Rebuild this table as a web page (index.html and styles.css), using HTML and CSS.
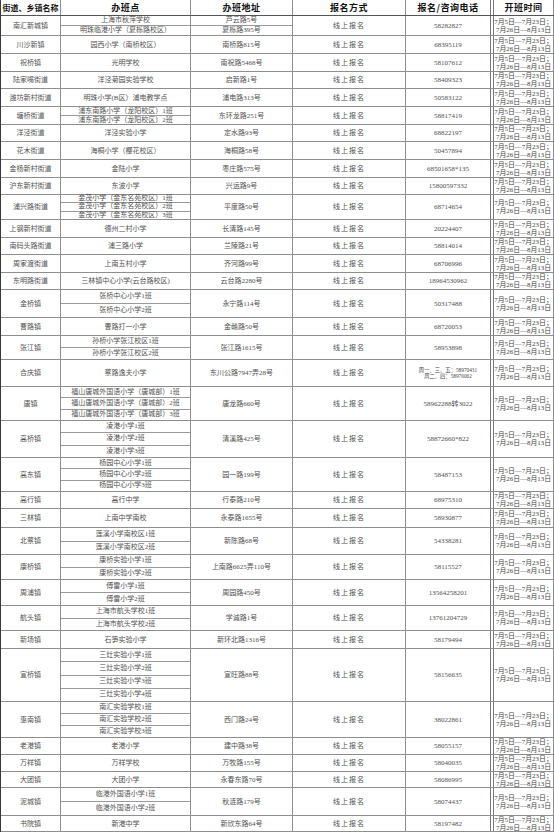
FILE: index.html
```html
<!DOCTYPE html>
<html lang="zh-CN">
<head>
<meta charset="utf-8">
<title>暑托班办班点</title>
<link rel="stylesheet" href="styles.css">
</head>
<body>
<div class="sheet">
  <div class="row head">
    <div class="c c1 hd narrow">街道、乡镇名称</div>
    <div class="c c2 hd">办班点</div>
    <div class="c c3 hd">办班地址</div>
    <div class="c c4 hd">报名方式</div>
    <div class="c c5 hd">报名/咨询电话</div>
    <div class="c c6 hd">开班时间</div>
  </div>

  <div class="row h20">
    <div class="c c1">南汇新城镇</div>
    <div class="stack c2"><div class="sub">上海市秋萍学校</div><div class="sub">明珠临港小学（夏栎路校区）</div></div>
    <div class="stack c3"><div class="sub">芦云路5号</div><div class="sub">夏栎路395号</div></div>
    <div class="c c4">线上报名</div>
    <div class="c c5">58282827</div>
    <div class="c c6 date"><span>7月5日—7月23日；</span><span>7月26日—8月13日</span></div>
  </div>

  <div class="row h18">
    <div class="c c1">川沙新镇</div>
    <div class="c c2">园西小学（南桥校区）</div>
    <div class="c c3">南桥路815号</div>
    <div class="c c4">线上报名</div>
    <div class="c c5">68395119</div>
    <div class="c c6 date"><span>7月5日—7月23日；</span><span>7月26日—8月13日</span></div>
  </div>

  <div class="row h18">
    <div class="c c1">祝桥镇</div>
    <div class="c c2">光明学校</div>
    <div class="c c3">南祝路5468号</div>
    <div class="c c4">线上报名</div>
    <div class="c c5">58107612</div>
    <div class="c c6 date"><span>7月5日—7月23日；</span><span>7月26日—8月13日</span></div>
  </div>

  <div class="row h17">
    <div class="c c1">陆家嘴街道</div>
    <div class="c c2">洋泾菊园实验学校</div>
    <div class="c c3">启新路1号</div>
    <div class="c c4">线上报名</div>
    <div class="c c5">58409323</div>
    <div class="c c6 date"><span>7月5日—7月23日；</span><span>7月26日—8月13日</span></div>
  </div>

  <div class="row h18">
    <div class="c c1">潍坊新村街道</div>
    <div class="c c2">明珠小学(B区）浦电教学点</div>
    <div class="c c3">浦电路313号</div>
    <div class="c c4">线上报名</div>
    <div class="c c5">50583122</div>
    <div class="c c6 date"><span>7月5日—7月23日；</span><span>7月26日—8月13日</span></div>
  </div>

  <div class="row h18">
    <div class="c c1">塘桥街道</div>
    <div class="stack c2"><div class="sub">浦东南路小学（龙阳校区）1班</div><div class="sub">浦东南路小学（龙阳校区）2班</div></div>
    <div class="c c3">东环龙路251号</div>
    <div class="c c4">线上报名</div>
    <div class="c c5">58817419</div>
    <div class="c c6 date"><span>7月5日—7月23日；</span><span>7月26日—8月13日</span></div>
  </div>

  <div class="row h17">
    <div class="c c1">洋泾街道</div>
    <div class="c c2">洋泾实验小学</div>
    <div class="c c3">定水路93号</div>
    <div class="c c4">线上报名</div>
    <div class="c c5">68822197</div>
    <div class="c c6 date"><span>7月5日—7月23日；</span><span>7月26日—8月13日</span></div>
  </div>

  <div class="row h18">
    <div class="c c1">花木街道</div>
    <div class="c c2">海桐小学（樱花校区）</div>
    <div class="c c3">海桐路58号</div>
    <div class="c c4">线上报名</div>
    <div class="c c5">50457894</div>
    <div class="c c6 date"><span>7月5日—7月23日；</span><span>7月26日—8月13日</span></div>
  </div>

  <div class="row h18">
    <div class="c c1">金杨新村街道</div>
    <div class="c c2">金陆小学</div>
    <div class="c c3">枣庄路575号</div>
    <div class="c c4">线上报名</div>
    <div class="c c5">68501658*135</div>
    <div class="c c6 date"><span>7月5日—7月23日；</span><span>7月26日—8月13日</span></div>
  </div>

  <div class="row h17">
    <div class="c c1">沪东新村街道</div>
    <div class="c c2">东波小学</div>
    <div class="c c3">兴运路9号</div>
    <div class="c c4">线上报名</div>
    <div class="c c5">15800597332</div>
    <div class="c c6 date"><span>7月5日—7月23日；</span><span>7月26日—8月13日</span></div>
  </div>

  <div class="row h25">
    <div class="c c1">浦兴路街道</div>
    <div class="stack c2"><div class="sub">金茂小学（金东名苑校区）1班</div><div class="sub">金茂小学（金东名苑校区）2班</div><div class="sub">金茂小学（金东名苑校区）3班</div></div>
    <div class="c c3">平度路50号</div>
    <div class="c c4">线上报名</div>
    <div class="c c5">68714654</div>
    <div class="c c6 date"><span>7月5日—7月23日；</span><span>7月26日—8月13日</span></div>
  </div>

  <div class="row h18">
    <div class="c c1">上钢新村街道</div>
    <div class="c c2">德州二村小学</div>
    <div class="c c3">长清路145号</div>
    <div class="c c4">线上报名</div>
    <div class="c c5">20224407</div>
    <div class="c c6 date"><span>7月5日—7月23日；</span><span>7月26日—8月13日</span></div>
  </div>

  <div class="row h17">
    <div class="c c1">南码头路街道</div>
    <div class="c c2">浦三路小学</div>
    <div class="c c3">兰陵路21号</div>
    <div class="c c4">线上报名</div>
    <div class="c c5">58814014</div>
    <div class="c c6 date"><span>7月5日—7月23日；</span><span>7月26日—8月13日</span></div>
  </div>

  <div class="row h18">
    <div class="c c1">周家渡街道</div>
    <div class="c c2">上南五村小学</div>
    <div class="c c3">齐河路99号</div>
    <div class="c c4">线上报名</div>
    <div class="c c5">68706996</div>
    <div class="c c6 date"><span>7月5日—7月23日；</span><span>7月26日—8月13日</span></div>
  </div>

  <div class="row h17">
    <div class="c c1">东明路街道</div>
    <div class="c c2">三林镇中心小学(云台路校区)</div>
    <div class="c c3">云台路2280号</div>
    <div class="c c4">线上报名</div>
    <div class="c c5">18964530962</div>
    <div class="c c6 date"><span>7月5日—7月23日；</span><span>7月26日—8月13日</span></div>
  </div>

  <div class="row h28">
    <div class="c c1">金桥镇</div>
    <div class="stack c2"><div class="sub">张桥中心小学1班</div><div class="sub">张桥中心小学2班</div></div>
    <div class="c c3">永宁路114号</div>
    <div class="c c4">线上报名</div>
    <div class="c c5">50317488</div>
    <div class="c c6 date"><span>7月5日—7月23日；</span><span>7月26日—8月13日</span></div>
  </div>

  <div class="row h18">
    <div class="c c1">曹路镇</div>
    <div class="c c2">曹路打一小学</div>
    <div class="c c3">金赣路50号</div>
    <div class="c c4">线上报名</div>
    <div class="c c5">68720053</div>
    <div class="c c6 date"><span>7月5日—7月23日；</span><span>7月26日—8月13日</span></div>
  </div>

  <div class="row h24">
    <div class="c c1">张江镇</div>
    <div class="stack c2"><div class="sub">孙桥小学张江校区1班</div><div class="sub">孙桥小学张江校区2班</div></div>
    <div class="c c3">张江路1615号</div>
    <div class="c c4">线上报名</div>
    <div class="c c5">58953898</div>
    <div class="c c6 date"><span>7月5日—7月23日；</span><span>7月26日—8月13日</span></div>
  </div>

  <div class="row h27">
    <div class="c c1">合庆镇</div>
    <div class="c c2">蔡路逸夫小学</div>
    <div class="c c3">东川公路7947弄28号</div>
    <div class="c c4">线上报名</div>
    <div class="c c5 tiny"><span>周一、三、五：58970431</span><span>周二、四：58976062</span></div>
    <div class="c c6 date"><span>7月5日—7月23日；</span><span>7月26日—8月13日</span></div>
  </div>

  <div class="row h34">
    <div class="c c1">唐镇</div>
    <div class="stack c2"><div class="sub">福山唐城外国语小学（唐城部）1班</div><div class="sub">福山唐城外国语小学（唐城部）2班</div><div class="sub">福山唐城外国语小学（唐城部）3班</div></div>
    <div class="c c3">唐龙路660号</div>
    <div class="c c4">线上报名</div>
    <div class="c c5">58962288转3022</div>
    <div class="c c6 date"><span>7月5日—7月23日；</span><span>7月26日—8月13日</span></div>
  </div>

  <div class="row h37">
    <div class="c c1">高桥镇</div>
    <div class="stack c2"><div class="sub">凌港小学1班</div><div class="sub">凌港小学2班</div><div class="sub">凌港小学3班</div></div>
    <div class="c c3">清溪路425号</div>
    <div class="c c4">线上报名</div>
    <div class="c c5">58872660*822</div>
    <div class="c c6 date"><span>7月5日—7月23日；</span><span>7月26日—8月13日</span></div>
  </div>

  <div class="row h34">
    <div class="c c1">高东镇</div>
    <div class="stack c2"><div class="sub">杨园中心小学1班</div><div class="sub">杨园中心小学2班</div><div class="sub">杨园中心小学3班</div></div>
    <div class="c c3">园一路199号</div>
    <div class="c c4">线上报名</div>
    <div class="c c5">58487153</div>
    <div class="c c6 date"><span>7月5日—7月23日；</span><span>7月26日—8月13日</span></div>
  </div>

  <div class="row h17">
    <div class="c c1">高行镇</div>
    <div class="c c2">高行中学</div>
    <div class="c c3">行泰路210号</div>
    <div class="c c4">线上报名</div>
    <div class="c c5">68975310</div>
    <div class="c c6 date"><span>7月5日—7月23日；</span><span>7月26日—8月13日</span></div>
  </div>

  <div class="row h19">
    <div class="c c1">三林镇</div>
    <div class="c c2">上南中学南校</div>
    <div class="c c3">永泰路1655号</div>
    <div class="c c4">线上报名</div>
    <div class="c c5">58930877</div>
    <div class="c c6 date"><span>7月5日—7月23日；</span><span>7月26日—8月13日</span></div>
  </div>

  <div class="row h27">
    <div class="c c1">北蔡镇</div>
    <div class="stack c2"><div class="sub">莲溪小学南校区1班</div><div class="sub">莲溪小学南校区2班</div></div>
    <div class="c c3">新陈路68号</div>
    <div class="c c4">线上报名</div>
    <div class="c c5">54338281</div>
    <div class="c c6 date"><span>7月5日—7月23日；</span><span>7月26日—8月13日</span></div>
  </div>

  <div class="row h25">
    <div class="c c1">康桥镇</div>
    <div class="stack c2"><div class="sub">康桥实验小学1班</div><div class="sub">康桥实验小学2班</div></div>
    <div class="c c3">上南路6625弄110号</div>
    <div class="c c4">线上报名</div>
    <div class="c c5">58115527</div>
    <div class="c c6 date"><span>7月5日—7月23日；</span><span>7月26日—8月13日</span></div>
  </div>

  <div class="row h26">
    <div class="c c1">周浦镇</div>
    <div class="stack c2"><div class="sub">傅雷小学1班</div><div class="sub">傅雷小学2班</div></div>
    <div class="c c3">周园路450号</div>
    <div class="c c4">线上报名</div>
    <div class="c c5">13564258201</div>
    <div class="c c6 date"><span>7月5日—7月23日；</span><span>7月26日—8月13日</span></div>
  </div>

  <div class="row h25">
    <div class="c c1">航头镇</div>
    <div class="stack c2"><div class="sub">上海市航头学校1班</div><div class="sub">上海市航头学校2班</div></div>
    <div class="c c3">学诚路1号</div>
    <div class="c c4">线上报名</div>
    <div class="c c5">13761204729</div>
    <div class="c c6 date"><span>7月5日—7月23日；</span><span>7月26日—8月13日</span></div>
  </div>

  <div class="row h18">
    <div class="c c1">新场镇</div>
    <div class="c c2">石笋实验小学</div>
    <div class="c c3">新环北路1316号</div>
    <div class="c c4">线上报名</div>
    <div class="c c5">58179494</div>
    <div class="c c6 date"><span>7月5日—7月23日；</span><span>7月26日—8月13日</span></div>
  </div>

  <div class="row h53">
    <div class="c c1">宣桥镇</div>
    <div class="stack c2"><div class="sub">三灶实验小学1班</div><div class="sub">三灶实验小学2班</div><div class="sub">三灶实验小学3班</div><div class="sub">三灶实验小学4班</div></div>
    <div class="c c3">宣旺路88号</div>
    <div class="c c4">线上报名</div>
    <div class="c c5">58156635</div>
    <div class="c c6 date"><span>7月5日—7月23日；</span><span>7月26日—8月13日</span></div>
  </div>

  <div class="row h36">
    <div class="c c1">惠南镇</div>
    <div class="stack c2"><div class="sub">南汇实验学校1班</div><div class="sub">南汇实验学校2班</div><div class="sub">南汇实验学校3班</div></div>
    <div class="c c3">西门路24号</div>
    <div class="c c4">线上报名</div>
    <div class="c c5">38022861</div>
    <div class="c c6 date"><span>7月5日—7月23日；</span><span>7月26日—8月13日</span></div>
  </div>

  <div class="row h17">
    <div class="c c1">老港镇</div>
    <div class="c c2">老港小学</div>
    <div class="c c3">建中路38号</div>
    <div class="c c4">线上报名</div>
    <div class="c c5">58055157</div>
    <div class="c c6 date"><span>7月5日—7月23日；</span><span>7月26日—8月13日</span></div>
  </div>

  <div class="row h17">
    <div class="c c1">万祥镇</div>
    <div class="c c2">万祥学校</div>
    <div class="c c3">万牧路155号</div>
    <div class="c c4">线上报名</div>
    <div class="c c5">58040035</div>
    <div class="c c6 date"><span>7月5日—7月23日；</span><span>7月26日—8月13日</span></div>
  </div>

  <div class="row h16">
    <div class="c c1">大团镇</div>
    <div class="c c2">大团小学</div>
    <div class="c c3">永春东路70号</div>
    <div class="c c4">线上报名</div>
    <div class="c c5">58086995</div>
    <div class="c c6 date"><span>7月5日—7月23日；</span><span>7月26日—8月13日</span></div>
  </div>

  <div class="row h28">
    <div class="c c1">泥城镇</div>
    <div class="stack c2"><div class="sub">临港外国语小学1班</div><div class="sub">临港外国语小学2班</div></div>
    <div class="c c3">秋涟路179号</div>
    <div class="c c4">线上报名</div>
    <div class="c c5">58074437</div>
    <div class="c c6 date"><span>7月5日—7月23日；</span><span>7月26日—8月13日</span></div>
  </div>

  <div class="row h16">
    <div class="c c1">书院镇</div>
    <div class="c c2">新港中学</div>
    <div class="c c3">新欣东路64号</div>
    <div class="c c4">线上报名</div>
    <div class="c c5">58197482</div>
    <div class="c c6 date"><span>7月5日—7月23日；</span><span>7月26日—8月13日</span></div>
  </div>
</div>
</body>
</html>
```

FILE: styles.css
```css
html, body {
  margin: 0;
  padding: 0;
  background: #ffffff;
  overflow: hidden;
}

.sheet {
  width: 554px;
  box-sizing: border-box;
  border-left: 1px solid #3a3a3a;
  font-family: "Liberation Serif", "Noto Sans CJK SC", serif;
  font-size: 7px;
  color: #505050;
}

.row {
  display: flex;
  box-sizing: border-box;
  border-bottom: 1px solid #8e8e8e;
}

.head { height: 16px; border-bottom-color: #555555; }
.h16 { height: 16px; }
.h17 { height: 17px; }
.h18 { height: 18px; }
.h19 { height: 19px; }
.h20 { height: 20px; }
.h24 { height: 24px; }
.h25 { height: 25px; }
.h26 { height: 26px; }
.h27 { height: 27px; }
.h28 { height: 28px; }
.h34 { height: 34px; }
.h36 { height: 36px; }
.h37 { height: 37px; }
.h53 { height: 53px; }

.c, .stack {
  box-sizing: border-box;
  border-right: 1px solid #8e8e8e;
  flex: none;
  min-height: 0;
}

.c {
  display: flex;
  flex-direction: column;
  align-items: center;
  justify-content: center;
  text-align: center;
  white-space: nowrap;
  line-height: 8px;
}

.c1 { width: 60px; }
.c2 { width: 130px; }
.c3 { width: 102px; }
.c4 { width: 113px; letter-spacing: 1px; }
.c5 { width: 88px; border-right: 4px double #7a7a7a; }
.c6 { width: 60px; }

.stack {
  display: flex;
  flex-direction: column;
}

.sub {
  flex: 1 1 0;
  min-height: 0;
  display: flex;
  align-items: center;
  justify-content: center;
  white-space: nowrap;
  line-height: 7px;
  border-top: 1px solid #9a9a9a;
}

.sub:first-child { border-top: none; }

.hd {
  font-family: "Noto Sans CJK SC", sans-serif;
  font-weight: bold;
  font-size: 9px;
  color: #111111;
  letter-spacing: 0.5px;
}

.hd.narrow { font-size: 8px; letter-spacing: 0; }

.date {
  font-size: 6.9px;
  line-height: 8px;
  color: #444444;
  align-items: center;
}

.tiny {
  font-size: 5.3px;
  line-height: 6px;
  color: #444444;
}
```
